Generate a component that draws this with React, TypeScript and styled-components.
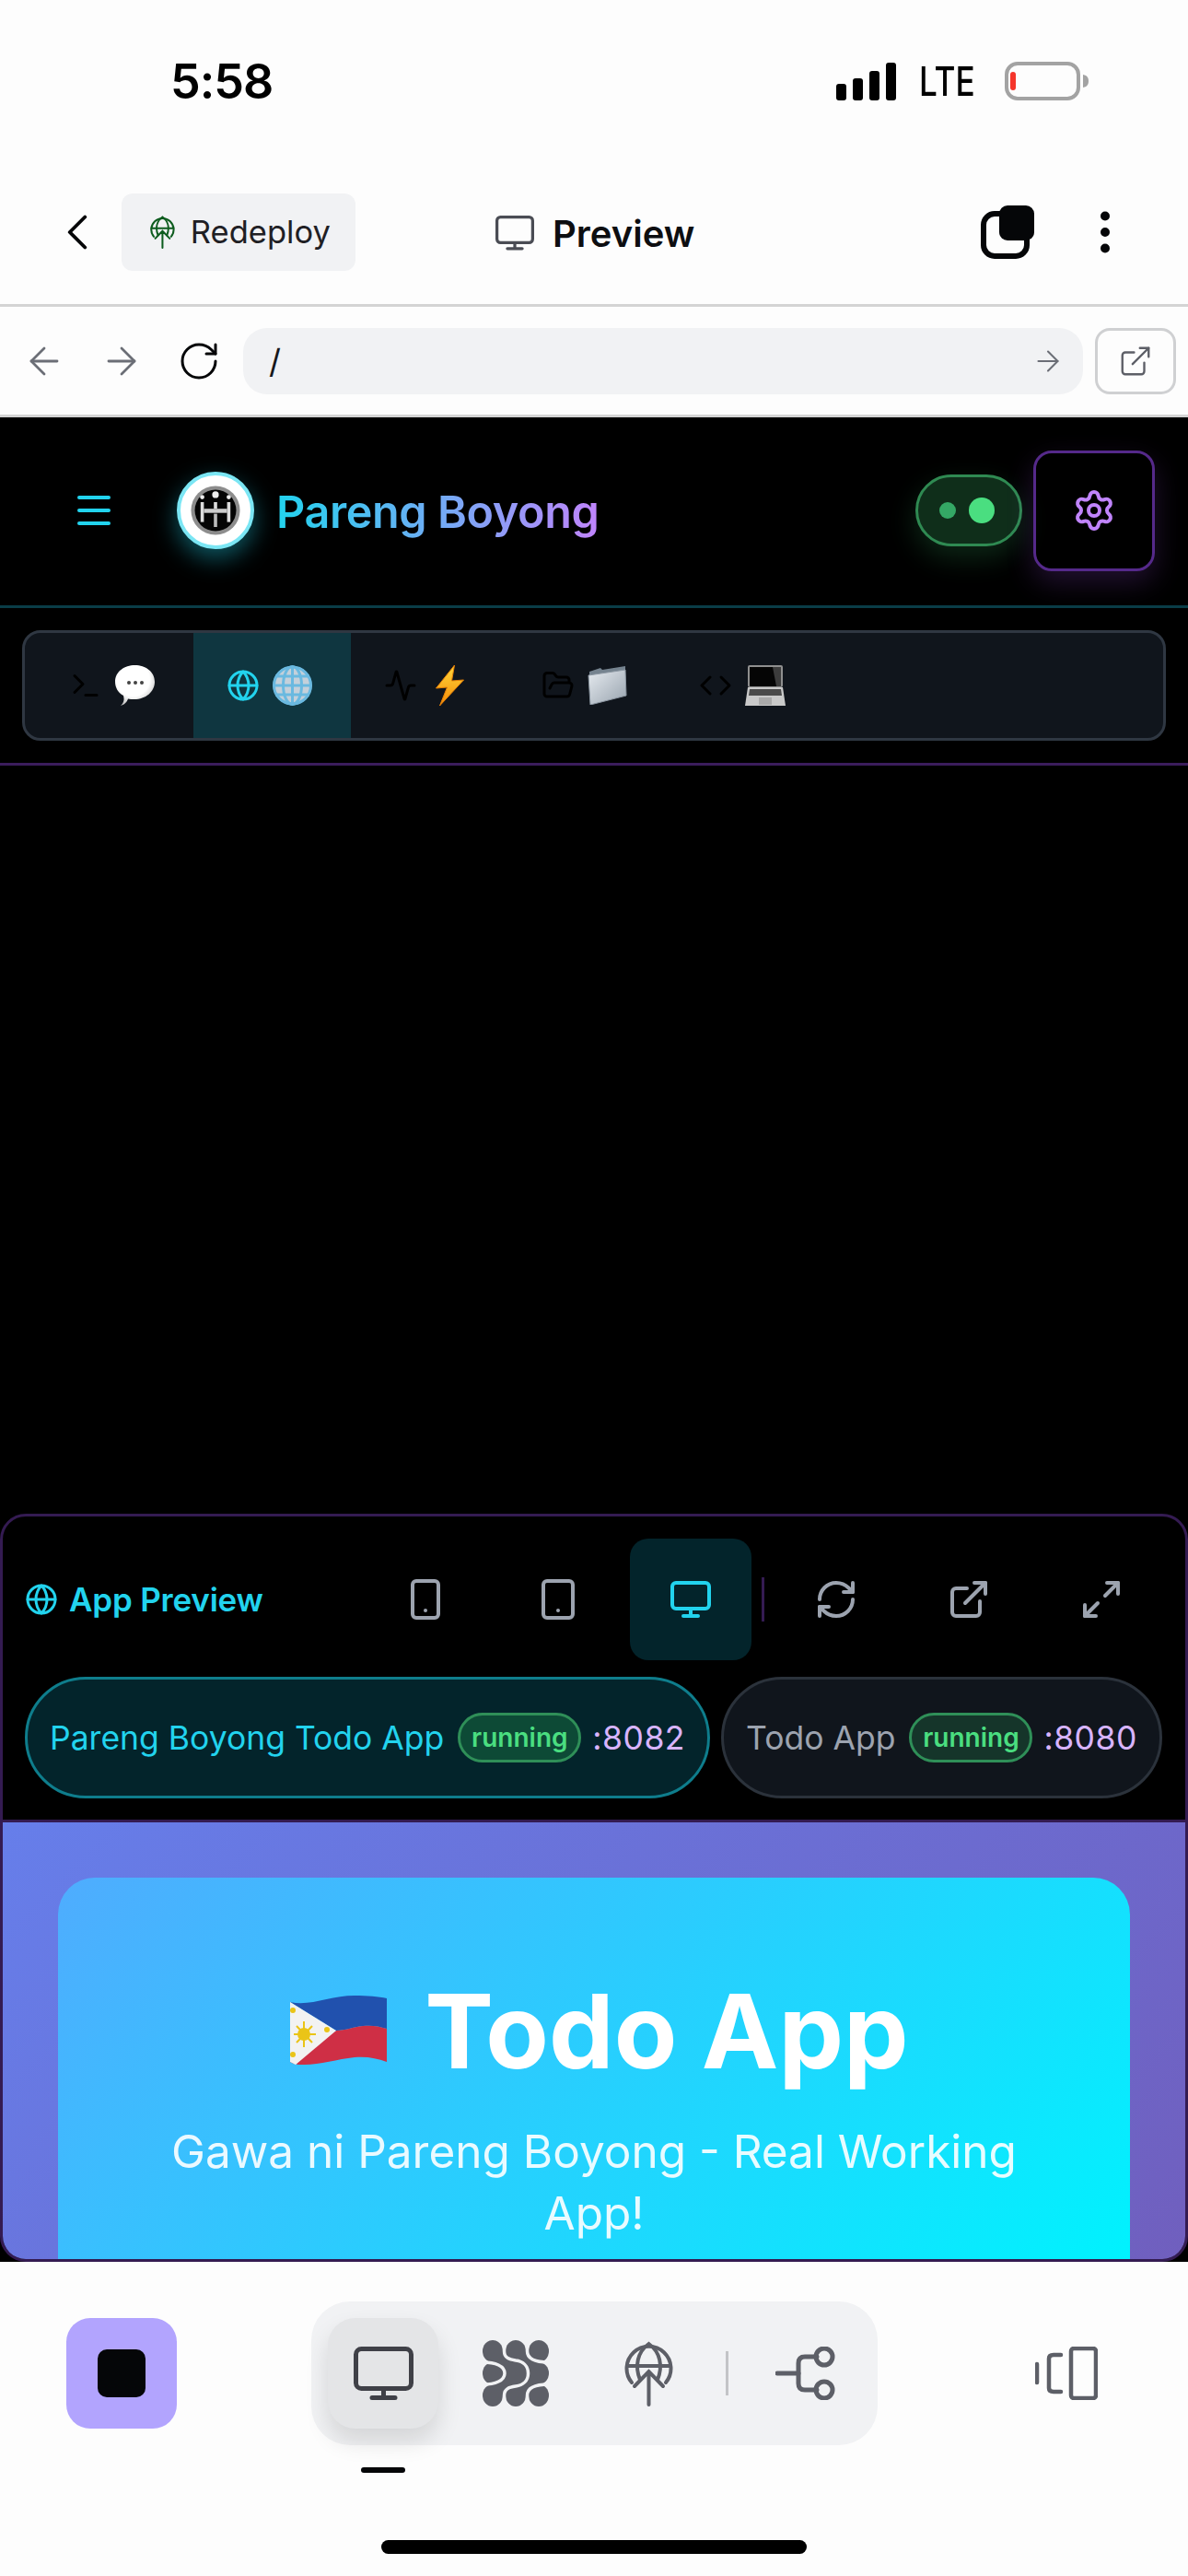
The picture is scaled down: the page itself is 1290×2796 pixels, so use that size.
import * as React from 'react';
import styled, { createGlobalStyle } from 'styled-components';
import {
  Activity,
  ArrowLeft,
  ArrowRight,
  ChevronLeft,
  Code,
  ExternalLink,
  FolderOpen,
  Globe,
  Maximize2,
  Menu,
  Monitor,
  MoreVertical,
  RefreshCw,
  RotateCw,
  Settings,
  Smartphone,
  Tablet,
  Terminal,
} from 'lucide-react';

const GlobalStyle = createGlobalStyle`
  html, body {
    margin: 0;
    padding: 0;
    background: #fdfdfd;
  }
  * {
    box-sizing: border-box;
  }
`;

const Page = styled.div`
  width: 1290px;
  height: 2796px;
  display: flex;
  flex-direction: column;
  overflow: hidden;
  background: #fdfdfd;
  font-family: Inter, 'Liberation Sans', sans-serif;
`;

const StatusBar = styled.div`
  height: 176px;
  flex: none;
  display: flex;
  align-items: center;
  padding: 0 107px 0 185px;
  color: #000;
`;

const Time = styled.div`
  font-size: 52px;
  font-weight: 600;
  letter-spacing: -1px;
`;

const StatusRight = styled.div`
  margin-left: auto;
  display: flex;
  align-items: center;
  gap: 25px;
`;

const Lte = styled.div`
  width: 64px;
  margin-right: 4px;
  font-size: 44px;
  font-weight: 500;
  transform: scaleX(0.8);
  transform-origin: left center;
`;

const Toolbar = styled.div`
  height: 157px;
  display: flex;
  align-items: center;
  padding: 0 60px 3px 51px;
  border-bottom: 3px solid #d4d4d4;
  flex: none;
`;

const RedeployChip = styled.div`
  width: 254px;
  height: 84px;
  margin-left: 15px;
  display: flex;
  align-items: center;
  gap: 17px;
  padding-left: 31px;
  background: #f1f2f4;
  border-radius: 12px;
  font-size: 34.5px;
  color: #1f2024;
`;

const PreviewTitle = styled.div`
  margin-left: 152px;
  padding-top: 3px;
  display: flex;
  align-items: center;
  gap: 20px;
  font-size: 40px;
  font-weight: 600;
  color: #0d0e11;
`;

const ToolbarRight = styled.div`
  margin-left: auto;
  display: flex;
  align-items: center;
  gap: 47px;
`;

const UrlBar = styled.div`
  height: 120px;
  display: flex;
  align-items: center;
  padding: 0 13px 0 24px;
  border-bottom: 3px solid #d4d4d4;
  flex: none;
  color: #6b6e76;
`;

const NavButton = styled.div<{ $gap: number }>`
  width: 48px;
  height: 48px;
  margin-right: ${(p) => p.$gap}px;
  flex: none;
  color: inherit;
`;

const UrlInput = styled.div`
  flex: 1;
  height: 72px;
  display: flex;
  align-items: center;
  justify-content: space-between;
  padding: 0 20px 0 28px;
  background: #f1f2f4;
  border-radius: 26px;
  font-size: 36px;
  color: #17181b;
`;

const OpenButton = styled.div`
  width: 88px;
  height: 72px;
  margin-left: 13px;
  display: flex;
  align-items: center;
  justify-content: center;
  border: 3px solid #cfd0d2;
  border-radius: 16px;
  color: #5d5f67;
`;

const Dark = styled.div`
  flex: 1;
  display: flex;
  flex-direction: column;
  background: #000;
  min-height: 0;
`;

const AppHeader = styled.div`
  height: 207px;
  flex: none;
  display: flex;
  align-items: center;
  padding: 0 36px 2px 78px;
  border-bottom: 3px solid #0a3d47;
  color: #22d3ee;
`;

const LogoRing = styled.div`
  width: 84px;
  height: 84px;
  margin-left: 66px;
  flex: none;
  display: flex;
  align-items: center;
  justify-content: center;
  background: #fff;
  border: 4px solid #7be6f4;
  border-radius: 50%;
  box-shadow: 0 10px 26px rgba(34, 211, 238, 0.42);
`;

const AppName = styled.div`
  margin-left: 24px;
  padding-top: 2px;
  font-size: 48.5px;
  font-weight: 600;
  letter-spacing: -0.4px;
  background: linear-gradient(90deg, #22d3ee, #c084fc);
  -webkit-background-clip: text;
  background-clip: text;
  color: transparent;
`;

const StatusToggle = styled.div`
  width: 116px;
  height: 78px;
  margin-left: auto;
  display: flex;
  align-items: center;
  gap: 14px;
  padding-left: 23px;
  background: #0f2e1a;
  border: 3px solid #2f8a52;
  border-radius: 39px;
  box-shadow: 0 12px 30px rgba(74, 222, 128, 0.18);
`;

const ToggleDot = styled.div<{ $big?: boolean }>`
  width: ${(p) => (p.$big ? 28 : 18)}px;
  height: ${(p) => (p.$big ? 28 : 18)}px;
  border-radius: 50%;
  background: ${(p) => (p.$big ? '#4ade80' : '#34a865')};
`;

const GearButton = styled.div`
  width: 132px;
  height: 131px;
  margin-left: 12px;
  display: flex;
  align-items: center;
  justify-content: center;
  border: 3px solid #55298a;
  border-radius: 20px;
  color: #c084fc;
  box-shadow: 0 12px 30px rgba(168, 85, 247, 0.2);
`;

const TabsWrap = styled.div`
  height: 171px;
  flex: none;
  padding: 24px 24px 0;
  border-bottom: 3px solid #3b1d5c;
`;

const TabBar = styled.div`
  height: 120px;
  display: flex;
  padding-left: 12px;
  background: #10151c;
  border: 3px solid #2f3742;
  border-radius: 20px;
  overflow: hidden;
`;

const Tab = styled.div<{ $active?: boolean }>`
  width: 171px;
  flex: none;
  display: flex;
  align-items: center;
  gap: 14px;
  padding-left: 36px;
  background: ${(p) => (p.$active ? '#0f3640' : 'transparent')};
  color: ${(p) => (p.$active ? '#22d3ee' : '#000')};
`;

const Spacer = styled.div`
  flex: 1;
`;

const PreviewPanel = styled.div`
  height: 812px;
  flex: none;
  display: flex;
  flex-direction: column;
  border: 3px solid #341b52;
  border-radius: 28px;
  overflow: hidden;
`;

const PanelHead = styled.div`
  display: flex;
  align-items: center;
  height: 132px;
  margin-top: 24px;
  padding: 0 25px 0 24px;
  flex: none;
`;

const PanelTitle = styled.div`
  display: flex;
  align-items: center;
  gap: 12px;
  margin-right: auto;
  font-size: 35px;
  font-weight: 600;
  color: #22d3ee;
  letter-spacing: -0.2px;
`;

const DeviceButton = styled.div<{ $active?: boolean }>`
  width: 132px;
  height: 132px;
  margin-left: 12px;
  flex: none;
  display: flex;
  align-items: center;
  justify-content: center;
  border-radius: 20px;
  background: ${(p) => (p.$active ? '#03242b' : 'transparent')};
  color: ${(p) => (p.$active ? '#22d3ee' : '#9ca3af')};
`;

const HeadDivider = styled.div`
  width: 3px;
  height: 48px;
  margin-left: 11px;
  background: #341b52;
  flex: none;
`;

const AppRow = styled.div`
  display: flex;
  gap: 12px;
  height: 132px;
  margin-top: 18px;
  padding-left: 24px;
  flex: none;
`;

const AppPill = styled.div<{ $active?: boolean }>`
  height: 132px;
  flex: none;
  display: flex;
  align-items: center;
  gap: 12px;
  padding: 0 24px;
  border-radius: 66px;
  border: 3px solid ${(p) => (p.$active ? '#0e7d8c' : '#2b323b')};
  background: ${(p) => (p.$active ? '#03242b' : '#10151c')};
  color: ${(p) => (p.$active ? '#22d3ee' : '#9ca3af')};
  font-size: 35.5px;
  white-space: nowrap;
`;

const RunningBadge = styled.div<{ $active?: boolean }>`
  width: 134px;
  height: 54px;
  margin-left: 3px;
  display: flex;
  align-items: center;
  justify-content: center;
  border: 3px solid #2f8f58;
  border-radius: 27px;
  background: ${(p) => (p.$active ? '#0d4a36' : '#15352a')};
  color: #4ade80;
  font-size: 28px;
  font-weight: 600;
`;

const Port = styled.span`
  color: #d8b4fe;
  letter-spacing: 0.5px;
`;

const WebFrame = styled.div`
  flex: 1;
  margin-top: 23px;
  padding: 60px 60px 0;
  border-top: 3px solid #341b52;
  background: linear-gradient(135deg, #667eea, #764ba2) 0 0 / 100% 1600px no-repeat;
  min-height: 0;
`;

const WebCard = styled.div`
  height: 100%;
  padding-top: 98px;
  border-radius: 40px 40px 0 0;
  background: linear-gradient(135deg, #4facfe, #00f2fe);
  color: #fff;
  text-align: center;
`;

const WebTitle = styled.div`
  display: flex;
  align-items: center;
  justify-content: center;
  gap: 40px;
  height: 136px;
  padding-left: 12px;
  font-size: 112px;
  font-weight: 700;
`;

const WebSub = styled.div`
  margin: 30px auto 0;
  width: 1000px;
  font-size: 49.5px;
  line-height: 67px;
  color: rgba(255, 255, 255, 0.9);
`;

const BottomArea = styled.div`
  height: 341px;
  flex: none;
  display: flex;
  flex-direction: column;
  padding-top: 43px;
  background: #fdfdfd;
`;

const BottomRow = styled.div`
  display: flex;
  align-items: flex-start;
  padding-left: 72px;
`;

const StopButton = styled.div`
  width: 120px;
  height: 120px;
  margin-top: 18px;
  display: flex;
  align-items: center;
  justify-content: center;
  background: #b2a4fe;
  border-radius: 26px;
`;

const StopSquare = styled.div`
  width: 52px;
  height: 52px;
  background: #050608;
  border-radius: 10px;
`;

const SegmentColumn = styled.div`
  margin-left: 146px;
  width: 615px;
  display: flex;
  flex-direction: column;
`;

const Segment = styled.div`
  height: 156px;
  display: flex;
  align-items: center;
  gap: 24px;
  padding: 0 18px;
  background: #f1f2f4;
  border-radius: 42px;
`;

const SegmentItem = styled.div<{ $active?: boolean }>`
  width: 120px;
  height: 120px;
  flex: none;
  display: flex;
  align-items: center;
  justify-content: center;
  border-radius: 30px;
  background: ${(p) => (p.$active ? '#e4e5e7' : 'transparent')};
  box-shadow: ${(p) => (p.$active ? '0 14px 26px rgba(0, 0, 0, 0.12)' : 'none')};
`;

const SegmentDivider = styled.div`
  width: 3px;
  height: 48px;
  background: #c3c4c7;
  flex: none;
`;

const ActiveMark = styled.div`
  width: 48px;
  height: 6px;
  margin: 24px 0 0 54px;
  background: #050608;
  border-radius: 3px;
`;

const SideIcon = styled.div`
  margin: 49px 0 0 171px;
`;

const HomeIndicator = styled.div`
  width: 462px;
  height: 15px;
  margin: 73px auto 0;
  background: #000;
  border-radius: 8px;
`;

const SignalIcon = () => (
  <svg width="65" height="41" viewBox="0 0 65 41">
    <rect x="0" y="23" width="11" height="18" rx="3" fill="#000" />
    <rect x="18" y="17" width="11" height="24" rx="3" fill="#000" />
    <rect x="36" y="9" width="11" height="32" rx="3" fill="#000" />
    <rect x="54" y="0" width="11" height="41" rx="3" fill="#000" />
  </svg>
);

const BatteryIcon = () => (
  <svg width="92" height="42" viewBox="0 0 92 42">
    <rect x="2" y="2" width="78" height="38" rx="12" fill="none" stroke="#a3a3a3" strokeWidth="4" />
    <rect x="6" y="11" width="6" height="20" rx="3" fill="#f5352b" />
    <path d="M85 14 C90 15 91 18 91 21 C91 24 90 27 85 28 Z" fill="#a3a3a3" />
  </svg>
);

const GlobeUpIcon = ({ height, color }: { height: number; color: string }) => (
  <svg width={(height * 53) / 71} height={height} viewBox="0 0 53 71" fill="none" stroke={color} strokeWidth="4" strokeLinecap="round">
    <path d="M8 45 A24 24 0 1 1 45 45" />
    <path d="M17 42 C11 27 14 12 26.5 3 C39 12 42 27 36 42" />
    <path d="M3 27 H50" />
    <path d="M26.5 69 V33 M11 49 L26.5 33 L42 49" />
  </svg>
);

const ScreenIcon = ({ width, color }: { width: number; color: string }) => (
  <svg width={width} height={(width * 58) / 65} viewBox="0 0 65 58" fill="none" stroke={color} strokeWidth="5" strokeLinecap="round">
    <rect x="2.5" y="2.5" width="60" height="43" rx="6" />
    <path d="M32.5 46 V55 M20 55.5 H45" />
  </svg>
);

const CopyIcon = () => (
  <svg width="58" height="58" viewBox="0 0 58 58">
    <rect x="3" y="9" width="47" height="46" rx="12" fill="none" stroke="#050608" strokeWidth="6" />
    <rect x="20" y="0" width="38" height="38" rx="9" fill="#050608" />
  </svg>
);

const LogoMark = () => (
  <svg width="54" height="54" viewBox="0 0 60 60">
    <circle cx="30" cy="30" r="29.5" fill="#8d8d8d" />
    <circle cx="30" cy="30" r="25" fill="#050505" />
    <circle cx="30" cy="11" r="4" fill="#eee" />
    <circle cx="14" cy="14" r="2.6" fill="#eee" />
    <circle cx="46" cy="14" r="2.6" fill="#eee" />
    <rect x="12" y="20" width="4" height="24" fill="#ddd" />
    <rect x="44" y="20" width="4" height="24" fill="#ddd" />
    <rect x="28" y="20" width="4" height="8" fill="#ddd" />
    <rect x="28" y="34" width="4" height="16" fill="#bbb" />
    <rect x="16" y="28" width="28" height="5" fill="#ccc" />
  </svg>
);

const BubbleEmoji = () => (
  <svg width="43" height="44" viewBox="0 0 43 44">
    <defs>
      <radialGradient id="bubbleFill" cx="0.45" cy="0.35" r="0.7">
        <stop offset="0.6" stopColor="#fff" />
        <stop offset="1" stopColor="#b5b5b5" />
      </radialGradient>
    </defs>
    <path d="M6 44 C10 40 10 37 9 33 C3 30 0 24 0 18 C0 7 10 0 21.5 0 C33 0 43 7 43 18 C43 29 33 37 21 37 C18 37 16 37 14 36.5 C13 40 10 43 6 44 Z" fill="url(#bubbleFill)" />
    <circle cx="15" cy="19" r="2" fill="#444" />
    <circle cx="22" cy="19" r="2" fill="#444" />
    <circle cx="29" cy="19" r="2" fill="#444" />
  </svg>
);

const GlobeEmoji = () => (
  <svg width="43" height="44" viewBox="0 0 43 44" fill="none">
    <circle cx="21.5" cy="22" r="21" fill="#c4d0da" />
    <g stroke="#6ab9e0" strokeWidth="3">
      <circle cx="21.5" cy="22" r="20" />
      <ellipse cx="21.5" cy="22" rx="10" ry="20.5" />
      <path d="M21.5 1 V43 M3 12 H40 M1 22 H42 M3 32 H40" />
    </g>
  </svg>
);

const BoltEmoji = () => (
  <svg width="43" height="44" viewBox="-5.5 0 43 44">
    <defs>
      <linearGradient id="boltFill" x1="0" y1="0" x2="0" y2="1">
        <stop offset="0" stopColor="#ffd83b" />
        <stop offset="1" stopColor="#f58a07" />
      </linearGradient>
    </defs>
    <path d="M21 0 L1 25 L13 24 L5 44 L31 16 L18 17 Z" fill="url(#boltFill)" stroke="#e47f07" strokeWidth="1" />
  </svg>
);

const FolderEmoji = () => (
  <svg width="43" height="42" viewBox="0 0 43 42">
    <defs>
      <linearGradient id="folderFill" x1="0" y1="0" x2="1" y2="1">
        <stop offset="0" stopColor="#e6ebf0" />
        <stop offset="1" stopColor="#98a3ae" />
      </linearGradient>
    </defs>
    <path d="M2 6 L14 2 L16 4 L41 0 L41 8 L2 14 Z" fill="#75838f" />
    <path d="M1 10 L41 4 L42 32 L3 42 Z" fill="url(#folderFill)" stroke="#8b96a1" strokeWidth="1" />
  </svg>
);

const LaptopEmoji = () => (
  <svg width="44" height="44" viewBox="0 0 44 44">
    <rect x="3" y="0" width="38" height="24" rx="2" fill="#8f8f8f" />
    <rect x="5" y="2" width="34" height="21" fill="#050505" />
    <path d="M30 2 L39 2 L39 23 L34 23 Z" fill="#3c3c3c" />
    <path d="M3 24 L41 24 L44 44 L0 44 Z" fill="#c9c9c9" />
    <path d="M5 26 L39 26 L40 33 L4 33 Z" fill="#4a4a4a" />
    <rect x="15" y="35" width="14" height="8" fill="#a9a9a9" />
  </svg>
);

// solid blob grid, the flowing shapes come from the light cuts drawn over it
const ClusterIcon = () => (
  <svg width="72" height="72" viewBox="0 0 72 72" fill="#5d5f67">
    {[12, 36, 60].map((cy) =>
      [11, 36, 61].map((cx) => <ellipse key={`${cx}-${cy}`} cx={cx} cy={cy} rx="11" ry="12" />),
    )}
    <rect x="11" y="12" width="50" height="48" />
    <g fill="none" stroke="#f1f2f4" strokeWidth="3.5">
      <path d="M23.5 0 V12 C23.5 20 30 21 36 22 C44 23 49.5 28 49.5 36 C49.5 44 44 49 36 50 C30 51 23.5 52 23.5 60 V72" />
      <path d="M48.5 0 V12 C48.5 20 56 24 72 24" />
      <path d="M48.5 72 V60 C48.5 52 56 48 72 48" />
      <path d="M0 24 C14 24 24 28 24 36 C24 44 14 48 0 48" />
    </g>
  </svg>
);

const BranchIcon = () => (
  <svg width="66" height="58" viewBox="0 0 66 58" fill="none" stroke="#5d5f67" strokeWidth="5" strokeLinecap="round">
    <path d="M2 29 H25" />
    <path d="M45 11 H32 Q25 11 25 18 V40 Q25 47 32 47 H45" />
    <ellipse cx="53" cy="11" rx="9" ry="9" />
    <ellipse cx="53" cy="47" rx="9" ry="9" />
  </svg>
);

const PanelsIcon = () => (
  <svg width="68" height="58" viewBox="0 0 68 58" fill="none" stroke="#5d5f67" strokeWidth="4.5" strokeLinecap="round">
    <rect x="39" y="2" width="27" height="54" rx="3" />
    <path d="M28 9 H20 Q15 9 15 13 V45 Q15 49 20 49 H28" />
    <path d="M2 19 V39" />
  </svg>
);

const FlagIcon = () => (
  <svg width="106" height="76" viewBox="0 0 106 76">
    <path d="M0 7 C22 12 44 0 70 0 C84 0 96 1 105 3 L105 36 C96 33 88 32 79 33 C68 34 60 38 50 38 Z" fill="#2151ae" />
    <path d="M50 38 C60 38 68 34 79 33 C88 32 96 33 105 36 L105 72 C94 68 84 66 70 67 C50 69 30 76 12 75 C8 75 5 75 0 72 Z" fill="#cf2f45" />
    <path d="M0 7 L50 38 L6 75 L0 72 Z" fill="#f2f2f2" />
    <g stroke="#eac417" strokeWidth="2">
      <path d="M15 28 V56 M4 42 H28 M7 33 L24 51 M24 33 L7 51" />
    </g>
    <circle cx="15" cy="42" r="7" fill="#eac417" />
    <circle cx="3" cy="16" r="3" fill="#eac417" />
    <circle cx="3" cy="64" r="3" fill="#eac417" />
    <circle cx="40" cy="37" r="3" fill="#eac417" />
  </svg>
);

const tabs = [
  { Icon: Terminal, Emoji: BubbleEmoji },
  { Icon: Globe, Emoji: GlobeEmoji, active: true },
  { Icon: Activity, Emoji: BoltEmoji },
  { Icon: FolderOpen, Emoji: FolderEmoji },
  { Icon: Code, Emoji: LaptopEmoji },
];

const App = (): React.JSX.Element => {
  return (
    <Page>
      <GlobalStyle />
      <StatusBar>
        <Time>5:58</Time>
        <StatusRight>
          <SignalIcon />
          <Lte>LTE</Lte>
          <BatteryIcon />
        </StatusRight>
      </StatusBar>

      <Toolbar>
        <ChevronLeft size={66} strokeWidth={1.4} color="#050608" />
        <RedeployChip>
          <GlobeUpIcon height={36} color="#0d5c1e" />
          Redeploy
        </RedeployChip>
        <PreviewTitle>
          <ScreenIcon width={42} color="#4a4c54" />
          Preview
        </PreviewTitle>
        <ToolbarRight>
          <CopyIcon />
          <MoreVertical size={60} strokeWidth={2} color="#050608" />
        </ToolbarRight>
      </Toolbar>

      <UrlBar>
        <NavButton $gap={36}><ArrowLeft size={48} strokeWidth={1.4} /></NavButton>
        <NavButton $gap={36}><ArrowRight size={48} strokeWidth={1.4} /></NavButton>
        <NavButton $gap={24}><RotateCw size={48} strokeWidth={1.5} color="#050608" /></NavButton>
        <UrlInput>
          /
          <ArrowRight size={36} strokeWidth={1.4} color="#6b6e76" />
        </UrlInput>
        <OpenButton>
          <ExternalLink size={38} strokeWidth={1.5} />
        </OpenButton>
      </UrlBar>

      <Dark>
        <AppHeader>
          <Menu size={48} />
          <LogoRing><LogoMark /></LogoRing>
          <AppName>Pareng Boyong</AppName>
          <StatusToggle>
            <ToggleDot />
            <ToggleDot $big />
          </StatusToggle>
          <GearButton><Settings size={48} /></GearButton>
        </AppHeader>

        <TabsWrap>
          <TabBar>
            {tabs.map(({ Icon, Emoji, active }, i) => (
              <Tab key={i} $active={active}>
                <Icon size={36} />
                <Emoji />
              </Tab>
            ))}
          </TabBar>
        </TabsWrap>

        <Spacer />

        <PreviewPanel>
          <PanelHead>
            <PanelTitle>
              <Globe size={36} />
              App Preview
            </PanelTitle>
            <DeviceButton><Smartphone size={48} /></DeviceButton>
            <DeviceButton><Tablet size={48} /></DeviceButton>
            <DeviceButton $active><Monitor size={48} /></DeviceButton>
            <HeadDivider />
            <DeviceButton><RefreshCw size={48} /></DeviceButton>
            <DeviceButton><ExternalLink size={48} /></DeviceButton>
            <DeviceButton><Maximize2 size={48} /></DeviceButton>
          </PanelHead>

          <AppRow>
            <AppPill $active>
              Pareng Boyong Todo App
              <RunningBadge $active>running</RunningBadge>
              <Port>:8082</Port>
            </AppPill>
            <AppPill>
              Todo App
              <RunningBadge>running</RunningBadge>
              <Port>:8080</Port>
            </AppPill>
          </AppRow>

          <WebFrame>
            <WebCard>
              <WebTitle>
                <FlagIcon />
                Todo App
              </WebTitle>
              <WebSub>Gawa ni Pareng Boyong - Real Working App!</WebSub>
            </WebCard>
          </WebFrame>
        </PreviewPanel>
      </Dark>

      <BottomArea>
        <BottomRow>
          <StopButton><StopSquare /></StopButton>
          <SegmentColumn>
            <Segment>
              <SegmentItem $active><ScreenIcon width={65} color="#3f4047" /></SegmentItem>
              <SegmentItem><ClusterIcon /></SegmentItem>
              <SegmentItem><GlobeUpIcon height={71} color="#5d5f67" /></SegmentItem>
              <SegmentDivider />
              <SegmentItem><BranchIcon /></SegmentItem>
            </Segment>
            <ActiveMark />
          </SegmentColumn>
          <SideIcon><PanelsIcon /></SideIcon>
        </BottomRow>
        <HomeIndicator />
      </BottomArea>
    </Page>
  );
};

export default App;
